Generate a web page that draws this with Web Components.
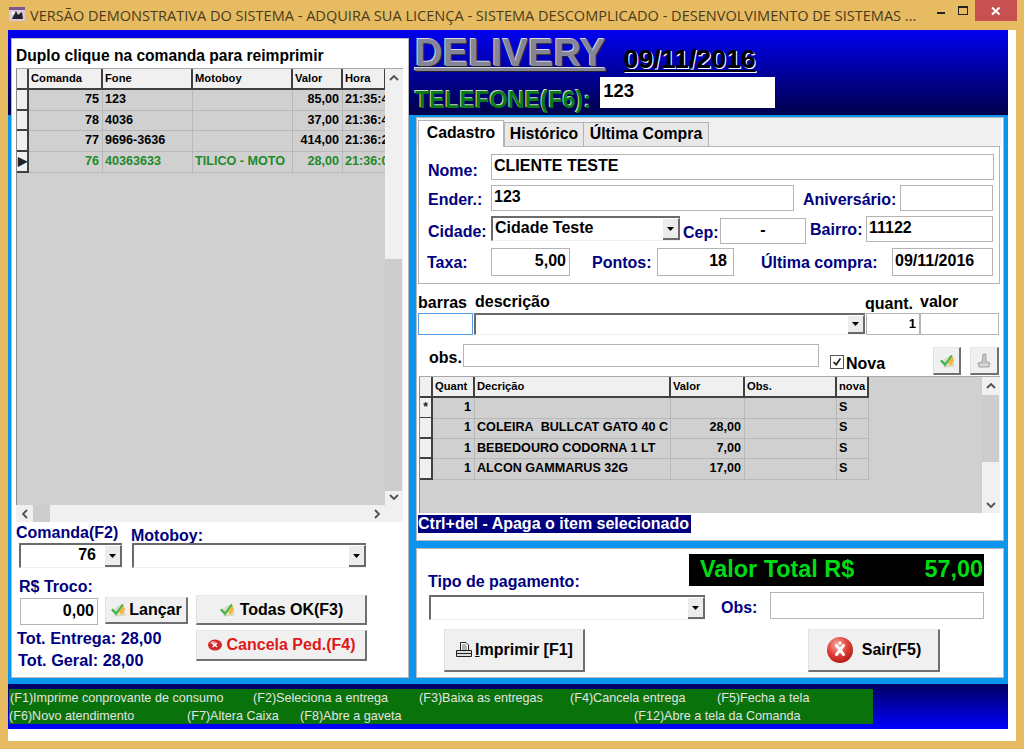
<!DOCTYPE html>
<html lang="pt">
<head>
<meta charset="utf-8">
<title>Delivery</title>
<style>
  html, body { margin: 0; padding: 0; background: #e6bb62; }
</style>
</head>
<body>
<delivery-app></delivery-app>
<script>
const CHECK_ICON = `<svg width="16" height="16" viewBox="0 0 16 16"><path d="M6 6 L13 2 L15 13 L5 14 Z" fill="#e9e2c8" stroke="#c8c0a8" stroke-width=".6"/><path d="M9 10 L13 3 L15 7 L12 13 Z" fill="#f2b63c"/><path d="M1 8 L3 6.5 L6 10 L12 2 L13.5 3 L6.2 13.5 Z" fill="#3fb54a"/></svg>`;
const STOP_SMALL = `<svg width="16" height="14" viewBox="0 0 16 14"><ellipse cx="8" cy="7" rx="7" ry="5.5" fill="#cf2a2a"/><ellipse cx="6" cy="4.6" rx="3" ry="1.6" fill="#ef8d8d"/><path d="M5.5 5 L10 9 M10 5 L5.5 9" stroke="#fff" stroke-width="1.6"/></svg>`;
const STOP_BIG = `<svg width="28" height="28" viewBox="0 0 28 28"><defs><radialGradient id="g" cx=".4" cy=".3" r=".8"><stop offset="0" stop-color="#f7b0a8"/><stop offset=".5" stop-color="#e04038"/><stop offset="1" stop-color="#a81410"/></radialGradient></defs><circle cx="14" cy="14" r="13" fill="url(#g)"/><path d="M10.5 9.5 L17.5 18.5 M17.5 9.5 L10.5 18.5" stroke="#fff" stroke-width="3" stroke-linecap="round"/><circle cx="14" cy="7" r="1.6" fill="#fff"/></svg>`;
const PRINT_ICON = `<svg width="18" height="18" viewBox="0 0 18 18" fill="#fff" stroke="#222" stroke-width="1"><path d="M5.5 1.5 H11 L13.5 4 V9.5 H5.5 Z"/><path d="M7 4 H11 M7 6 H12 M7 8 H12" stroke-width=".7"/><path d="M1.5 9.5 H16.5 V15.5 H1.5 Z" fill="#ddd"/><path d="M1.5 12.5 H16.5"/></svg>`;
const GHOST_ICON = `<svg width="16" height="18" viewBox="0 0 16 18"><path d="M7 2 L10 2 L10 9 L14 11 L13 15 L3 15 L2 11 L6 10 Z" fill="#c4c4c4" stroke="#a8a8a8"/><path d="M4 13 H12" stroke="#eee"/></svg>`;

class TitleBar extends HTMLElement {
  constructor() {
    super();
    this.attachShadow({ mode: "open" }).innerHTML = `
      <style>
        :host { display: flex; height: 30px; box-sizing: border-box; padding-left: 9px; align-items: flex-start; color: #4a3b1c; font: 14.55px "Open Sans", sans-serif; }
        #icon { margin: 7px 5px 0 0; flex: none; }
        #text { flex: 1; line-height: 31px; white-space: nowrap; overflow: hidden; }
        #btns { display: flex; flex: none; width: 93px; }
        .b { width: 24px; height: 21px; display: flex; align-items: center; justify-content: center; }
        #close { width: 45px; background: #c75050; margin-right: 7px; }
      </style>
      <svg id="icon" width="16" height="14" viewBox="0 0 16 14"><rect width="16" height="14" fill="#d8c8d8"/><path d="M0 0 H16 V3 H0 Z" fill="#7a5a8a"/><path d="M3 12 L7 4 L9 8 L13 5 L14 12 Z" fill="#222"/><circle cx="4" cy="6" r="1.5" fill="#fff"/></svg>
      <div id="text"><slot></slot></div>
      <div id="btns">
        <div class="b"><svg width="10" height="10"><rect x="0" y="6" width="8" height="2" fill="#222"/></svg></div>
        <div class="b"><svg width="12" height="10"><rect x=".5" y=".5" width="9" height="8" fill="none" stroke="#222"/><rect x="0" y="0" width="10" height="2" fill="#222"/></svg></div>
        <div class="b" id="close"><svg width="10" height="10"><path d="M1 1.5 L8.5 8.5 M8.5 1.5 L1 8.5" stroke="#fff" stroke-width="2"/></svg></div>
      </div>`;
  }
}

class FormLabel extends HTMLElement {
  constructor() {
    super();
    this.attachShadow({ mode: "open" }).innerHTML = `
      <style>:host { display: block; flex: none; box-sizing: border-box; color: #000080; font: bold 16px/18px "Liberation Sans", sans-serif; white-space: nowrap; }</style><slot></slot>`;
  }
}

class TextBox extends HTMLElement {
  constructor() {
    super();
    this.attachShadow({ mode: "open" }).innerHTML = `
      <style>:host { display: flex; flex: none; align-items: center; box-sizing: border-box; height: 26px; padding: 0 2px 2px 2px; background: #fff; border: 1px solid #b4b4b4; color: #000; font: bold 16px "Liberation Sans", sans-serif; white-space: nowrap; overflow: hidden; }
      :host([right]) { justify-content: flex-end; }
      :host([center]) { justify-content: center; }</style><slot></slot>`;
  }
}

class ComboBox extends HTMLElement {
  constructor() {
    super();
    this.attachShadow({ mode: "open" }).innerHTML = `
      <style>
        :host { display: flex; flex: none; box-sizing: border-box; height: 25px; background: #fff; border-top: 2px solid #6a6a6a; border-left: 2px solid #6a6a6a; border-bottom: 1px solid #f0f0f0; color: #000; font: bold 16px "Liberation Sans", sans-serif; white-space: nowrap; }
        #val { flex: 1; padding: 0 3px 2px 2px; display: flex; align-items: center; overflow: hidden; }
        :host([right]) #val { justify-content: flex-end; padding-right: 9px; }
        #arrow { flex: none; width: 17px; box-sizing: border-box; background: #ececec; border-right: 2px solid #6a6a6a; border-bottom: 2px solid #6a6a6a; border-top: 1px solid #fff; display: flex; align-items: center; justify-content: center; }
      </style>
      <div id="val"><slot></slot></div>
      <div id="arrow"><svg width="7" height="4"><path d="M0 0 H7 L3.5 4 Z" fill="#000"/></svg></div>`;
  }
}

class PushButton extends HTMLElement {
  constructor() {
    super();
    this.attachShadow({ mode: "open" }).innerHTML = `
      <style>:host { display: flex; flex: none; align-items: center; justify-content: center; box-sizing: border-box; background: #f0f0f0; border-right: 2px solid #707070; border-bottom: 2px solid #707070; border-left: 1px solid #e0e0e0; border-top: 1px solid #e8e8e8; color: #000; font: bold 16px "Liberation Sans", sans-serif; white-space: nowrap; gap: 3px; }</style><slot></slot>`;
  }
}

class ScrollBar extends HTMLElement {
  constructor() {
    super();
    this.attachShadow({ mode: "open" });
  }
  connectedCallback() {
    const h = this.hasAttribute("horizontal");
    const start = this.getAttribute("start");
    const size = this.getAttribute("size");
    const chev = h ? ["M5 1 L1 5 L5 9", "M1 1 L5 5 L1 9"] : ["M1 5 L5 1 L9 5", "M1 1 L5 5 L9 1"];
    const svg = (d) => `<div class="e"><svg width="${h ? 6 : 10}" height="${h ? 10 : 6}"><path d="${d}" fill="none" stroke="#505050" stroke-width="1.8"/></svg></div>`;
    this.shadowRoot.innerHTML = `
      <style>
        :host { display: flex; flex: none; background: #f0f0f0; flex-direction: ${h ? "row" : "column"}; ${h ? "height:17px" : "width:17px"}; }
        .e { flex: none; ${h ? "width:17px" : "height:17px"}; display: flex; align-items: center; justify-content: center; }
        #track { flex: 1; position: relative; }
        #thumb { position: absolute; background: #cdcdcd; ${h ? `left:${start}px;width:${size}px;top:0;bottom:0` : `top:${start}px;height:${size}px;left:0;right:0`}; }
      </style>
      ${svg(chev[0])}<div id="track"><div id="thumb"></div></div>${svg(chev[1])}`;
  }
}

class DataGrid extends HTMLElement {
  constructor() {
    super();
    this.attachShadow({ mode: "open" });
  }
  connectedCallback() {
    const cols = this.getAttribute("cols").split(" ").map(Number);
    const head = this.getAttribute("head").split("|");
    const align = this.getAttribute("align").split(" ");
    const rows = this.getAttribute("rows").split(";").map((r) => r.split("|"));
    const marks = (this.getAttribute("marks") || "").split("|");
    const active = Number(this.getAttribute("active") ?? -1);
    const template = cols.map((c) => c + "px").join(" ");
    let html = `<div class="r h" style="grid-template-columns:${template}"><div class="m"></div>` +
      head.map((t) => `<div class="c">${t}</div>`).join("") + `</div>`;
    rows.forEach((row, i) => {
      html += `<div class="r ${i === active ? "on" : ""}" style="grid-template-columns:${template}"><div class="m">${marks[i] || ""}</div>` +
        row.map((t, j) => `<div class="c ${align[j]}">${t}</div>`).join("") + `</div>`;
    });
    this.shadowRoot.innerHTML = `
      <style>
        :host { display: flex; flex: none; flex-direction: column; box-sizing: border-box; background: #f0f0f0; border-top: 1px solid #a8a8a8; color: #000; font: bold 12.6px "Liberation Sans", sans-serif; }
        #top { flex: 1; display: flex; min-height: 0; }
        #body { flex: 1; background: #d0d0d0; border-left: 1px solid #8a8a8a; overflow: hidden; }
        .r { display: grid; height: var(--row, 20.5px); white-space: nowrap; }
        .c { box-sizing: border-box; padding: 0 3px 0 2px; overflow: hidden; border-right: 1px solid #b8b8b8; border-bottom: 1px solid #b8b8b8; line-height: 19px; }
        .c.r2 { text-align: right; }
        .m { box-sizing: border-box; background: #f0f0f0; border-right: 2px solid #404040; border-bottom: 2px solid #404040; text-align: center; font: bold 12px/19px "Liberation Sans", sans-serif; color: #222; }
        .h { height: 21px; font-size: 11.2px; }
        .h .c { background: #f0f0f0; border-right: 2px solid #404040; border-bottom: 2px solid #404040; line-height: 18px; }
        .on .c { color: #1e8a2a; }
        #bottom { display: flex; flex: none; }
        #corner { width: 18px; flex: none; }
        scroll-bar { margin-right: 1px; }
        #hs { flex: 1; margin: 0; }
      </style>
      <div id="top"><div id="body">${html}</div><scroll-bar start="${this.getAttribute("vstart")}" size="${this.getAttribute("vsize")}"></scroll-bar></div>
      ${this.hasAttribute("hsize") ? `<div id="bottom"><scroll-bar id="hs" horizontal start="${this.getAttribute("hstart")}" size="${this.getAttribute("hsize")}"></scroll-bar><div id="corner"></div></div>` : ""}`;
  }
}

class ComandaPanel extends HTMLElement {
  constructor() {
    super();
    this.attachShadow({ mode: "open" }).innerHTML = `
      <style>
        :host { display: block; flex: none; box-sizing: border-box; width: 398px; height: 640px; margin: 8px 0 0 3px; padding: 8px 0 0 4px; background: #fff; border: 1px solid #b8b8b8; }
        #title { font: bold 15.6px/18px "Liberation Sans", sans-serif; color: #000; white-space: nowrap; }
        data-grid { width: 387px; height: 454px; margin-top: 3px; }
        .row { display: flex; }
        #low { display: flex; margin-top: 7px; }
        #lowl { width: 180px; flex: none; }
        #lowr { display: flex; flex-direction: column; gap: 5px; margin-top: 20px; }
      </style>
      <div id="title">Duplo clique na comanda para reimprimir</div>
      <data-grid cols="12 74 90 100 50 43" head="Comanda|Fone|Motoboy|Valor|Hora" align="r2 l l r2 l"
        rows="75|123||85,00|21:35:4;78|4036||37,00|21:36:4;77|9696-3636||414,00|21:36:2;76|40363633|TILICO - MOTO|28,00|21:36:0"
        marks="|||&#9654;" active="3" vstart="173" vsize="232" hstart="0" hsize="17"></data-grid>
      <div class="row" style="height:21px">
        <form-label style="width:115px;padding-top:2px">Comanda(F2)</form-label>
        <form-label style="padding-top:5px">Motoboy:</form-label>
      </div>
      <div class="row" style="padding-left:3px;gap:10px">
        <combo-box right style="width:103px">76</combo-box>
        <combo-box style="width:234px"></combo-box>
      </div>
      <div id="low">
        <div id="lowl">
          <form-label style="margin-left:3px;padding-top:3px">R$ Troco:</form-label>
          <div class="row" style="gap:7px;margin:1px 0 0 4px;align-items:flex-start">
            <text-box right style="width:78px;height:27px;margin-top:1px;padding-right:3px">0,00</text-box>
            <push-button style="width:83px;height:27px">${CHECK_ICON}Lançar</push-button>
          </div>
          <form-label style="margin:4px 0 0 1px;font-size:16.3px">Tot. Entrega: 28,00</form-label>
          <form-label style="margin:4px 0 0 2px;font-size:16.3px">Tot. Geral: 28,00</form-label>
        </div>
        <div id="lowr">
          <push-button style="width:171px;height:30px;gap:5px">${CHECK_ICON}Todas OK(F3)</push-button>
          <push-button style="width:171px;height:31px;color:#e01818;gap:4px">${STOP_SMALL}Cancela Ped.(F4)</push-button>
        </div>
      </div>`;
  }
}

class PhoneHeader extends HTMLElement {
  constructor() {
    super();
    this.attachShadow({ mode: "open" }).innerHTML = `
      <style>
        :host { display: flex; flex-direction: column; flex: none; height: 87px; box-sizing: border-box; font-family: "Liberation Sans", sans-serif; font-weight: bold; white-space: nowrap; }
        #line1 { display: flex; height: 47px; }
        #delivery { font-size: 38.4px; line-height: 46px; color: #85859a; text-decoration: underline; text-shadow: -1px -1px 0 #d8d8e0, 1px 1px 0 #222; margin-left: 1px; }
        #date { font-size: 26.7px; line-height: 30px; margin: 14px 0 0 18px; color: #000; text-decoration: underline; text-shadow: 1px 1px 0 #fff; }
        #line2 { display: flex; }
        #phone { font-size: 23.5px; line-height: 30px; color: #0a7a14; text-shadow: -1px -1px 0 #c8d8c8; margin: 8px 0 0 1px; }
        text-box { width: 175px; height: 31px; margin-left: 9px; border: 0; align-items: flex-start; font-size: 18.5px; padding: 3px 3px 0; }
      </style>
      <div id="line1"><div id="delivery">DELIVERY</div><div id="date">09/11/2016</div></div>
      <div id="line2"><div id="phone">TELEFONE(F6):</div><text-box>123</text-box></div>`;
  }
}

class ClientTabs extends HTMLElement {
  constructor() {
    super();
    this.attachShadow({ mode: "open" }).innerHTML = `
      <style>
        :host { display: block; flex: none; box-sizing: border-box; width: 588px; height: 424px; margin-left: 2px; background: #fff; border: 1px solid #b8b8b8; font-family: "Liberation Sans", sans-serif; }
        #strip { display: flex; align-items: flex-end; height: 28px; padding-left: 1px; margin-right: 2px; background: #f0f0f0; border-bottom: 0; }
        .tab { box-sizing: border-box; height: 24px; padding: 0; text-align: center; font: bold 15.8px/22px "Liberation Sans", sans-serif; background: #e8e8e8; border: 1px solid #b4b4b4; border-bottom: 0; margin-left: -1px; }
        .tab.on { height: 27px; background: #fff; line-height: 23px; margin: 0 1px 0 0; margin-bottom: -1px; position: relative; }
        #fields { box-sizing: border-box; width: 582px; height: 138px; margin-left: 1px; border: 1px solid #b4b4b4; background: #fff; padding: 7px 0 0 9px; }
        .row { display: flex; align-items: flex-start; }
        .below { display: flex; align-items: flex-start; margin-left: 1px; }
        #ctrl { display: block; width: 273px; height: 18px; margin: 2px 0 0 1px; background: #000080; color: #fff; font: bold 16px/18px "Liberation Sans", sans-serif; white-space: nowrap; overflow: hidden; }
        #check { width: 14px; height: 14px; flex: none; box-sizing: border-box; border: 1px solid #555; background: #fff; margin: 11px 2px 0 11px; }
        push-button.mini { width: 28px; height: 28px; margin-top: 3px; }
      </style>
      <div id="strip">
        <div class="tab on" style="width:86px">Cadastro</div>
        <div class="tab" style="width:80px">Histórico</div>
        <div class="tab" style="width:126px">Última Compra</div>
      </div>
      <div id="fields">
        <div class="row">
          <form-label style="width:63px;padding-top:8px">Nome:</form-label>
          <text-box style="width:503px">CLIENTE TESTE</text-box>
        </div>
        <div class="row" style="margin-top:5px">
          <form-label style="width:63px;padding-top:6px">Ender.:</form-label>
          <text-box style="width:303px">123</text-box>
          <form-label style="margin-left:9px;width:97px;padding-top:6px">Aniversário:</form-label>
          <text-box style="width:93px"></text-box>
        </div>
        <div class="row" style="margin-top:5px">
          <form-label style="width:63px;padding-top:7px">Cidade:</form-label>
          <combo-box style="width:189px">Cidade Teste</combo-box>
          <form-label style="margin-left:3px;width:37px;padding-top:8px">Cep:</form-label>
          <text-box center style="width:86px;margin-top:2px">-</text-box>
          <form-label style="margin-left:4px;width:56px;padding-top:5px">Bairro:</form-label>
          <text-box style="width:127px">11122</text-box>
        </div>
        <div class="row" style="margin-top:4px">
          <form-label style="width:63px;padding-top:6px;margin-left:-1px;margin-right:1px">Taxa:</form-label>
          <text-box right style="width:79px;height:28px;padding-right:3px">5,00</text-box>
          <form-label style="margin-left:22px;width:65px;padding-top:6px">Pontos:</form-label>
          <text-box right style="width:77px;height:28px;padding-right:6px">18</text-box>
          <form-label style="margin-left:27px;width:131px;padding-top:6px">Última compra:</form-label>
          <text-box style="width:101px;height:28px">09/11/2016</text-box>
        </div>
      </div>
      <div class="below" style="height:29px">
        <form-label style="color:#000;width:57px;padding-top:10px">barras</form-label>
        <form-label style="color:#000;width:390px;padding-top:9px">descrição</form-label>
        <form-label style="color:#000;width:55px;padding-top:11px">quant.</form-label>
        <form-label style="color:#000;padding-top:9px">valor</form-label>
      </div>
      <div class="below" style="height:22px">
        <text-box style="width:55px;height:22px;border-color:#569de5"></text-box>
        <combo-box style="width:391px;height:22px;margin-left:1px"></combo-box>
        <text-box right style="width:54px;height:22px;margin-left:1px;padding-right:3px;font-size:13px">1</text-box>
        <text-box style="width:79px;height:22px"></text-box>
      </div>
      <div class="below" style="height:32px;margin-top:9px">
        <form-label style="color:#000;margin-left:11px;width:34px;padding-top:5px">obs.</form-label>
        <text-box style="width:356px;height:23px"></text-box>
        <svg id="check" viewBox="0 0 14 14"><path d="M3 7 L6 10 L11 3" fill="none" stroke="#222" stroke-width="2"/></svg>
        <form-label style="color:#000;width:87px;padding-top:11px">Nova</form-label>
        <push-button class="mini">${CHECK_ICON}</push-button>
        <push-button class="mini" style="width:29px;margin-left:9px">${GHOST_ICON}</push-button>
      </div>
      <data-grid style="width:581px;height:137px;margin-left:2px;--row:20.4px" cols="13 42 196 74 92 32" head="Quant|Decrição|Valor|Obs.|nova" align="r2 l r2 l l"
        rows="1||||S;1|COLEIRA&nbsp; BULLCAT GATO 40 C|28,00||S;1|BEBEDOURO CODORNA 1 LT|7,00||S;1|ALCON GAMMARUS 32G|17,00||S"
        marks="*" vstart="1" vsize="67"></data-grid>
      <div id="ctrl">Ctrl+del - Apaga o item selecionado</div>`;
  }
}

class PaymentPanel extends HTMLElement {
  constructor() {
    super();
    this.attachShadow({ mode: "open" }).innerHTML = `
      <style>
        :host { display: block; flex: none; box-sizing: border-box; width: 588px; height: 130px; margin: 7px 0 0 2px; background: #fff; border: 1px solid #b8b8b8; padding-top: 5px; }
        .row { display: flex; align-items: flex-start; }
        #total { display: flex; justify-content: space-between; box-sizing: border-box; width: 295px; height: 32px; margin-left: auto; margin-right: 19px; padding: 0 1px 0 11px; background: #000; color: #00dc14; font: bold 23.4px/31px "Liberation Sans", sans-serif; white-space: nowrap; }
      </style>
      <div class="row" style="height:38px">
        <form-label style="padding:19px 0 0 11px">Tipo de pagamento:</form-label>
        <div id="total"><span>Valor Total R$</span><span>57,00</span></div>
      </div>
      <div class="row" style="height:37px;padding-left:12px">
        <combo-box style="width:276px;margin-top:3px"></combo-box>
        <form-label style="margin-left:16px;width:49px;padding-top:7px">Obs:</form-label>
        <text-box style="width:214px;height:27px"></text-box>
      </div>
      <div class="row" style="padding-left:27px">
        <push-button style="width:141px;height:43px;gap:2px">${PRINT_ICON}<span><u>I</u>mprimir [F1]</span></push-button>
        <push-button style="width:132px;height:43px;margin-left:223px;gap:8px">${STOP_BIG}Sair(F5)</push-button>
      </div>`;
  }
}

class HelpBar extends HTMLElement {
  constructor() {
    super();
    this.attachShadow({ mode: "open" }).innerHTML = `
      <style>
        :host { display: block; box-sizing: border-box; width: 864px; height: 35px; margin: 5px 0 0 1px; background: #0a720a; color: #e4e4e4; font: 12.6px/18px "Liberation Sans", sans-serif; white-space: nowrap; }
        .l { display: flex; }
        .l span { flex: none; }
      </style>
      <div class="l" style="padding-left:1px"><span style="width:243px">(F1)Imprime conprovante de consumo</span><span style="width:166px">(F2)Seleciona a entrega</span><span style="width:151px">(F3)Baixa as entregas</span><span style="width:147px">(F4)Cancela entrega</span><span>(F5)Fecha a tela</span></div>
      <div class="l"><span style="width:178px">(F6)Novo atendimento</span><span style="width:113px">(F7)Altera Caixa</span><span style="width:334px">(F8)Abre a gaveta</span><span>(F12)Abre a tela da Comanda</span></div>`;
  }
}

class DeliveryApp extends HTMLElement {
  constructor() {
    super();
    this.attachShadow({ mode: "open" }).innerHTML = `
      <style>
        :host { display: flex; flex-direction: column; box-sizing: border-box; width: 1024px; height: 749px; background: #e6bb62; overflow: hidden; }
        #client { width: 1008px; height: 711px; margin-left: 8px; background: #fff; }
        #form { width: 1000px; height: 699px; background: linear-gradient(#0000f0 0, #00004a 85px, #0a96ee 85px, #0a96ee 654px, #000060 654px, #0000ff 699px); }
        #main { display: flex; height: 654px; }
        #right { margin-left: 5px; flex: 1; display: flex; flex-direction: column; }
      </style>
      <title-bar>VERSÃO DEMONSTRATIVA DO SISTEMA - ADQUIRA SUA LICENÇA - SISTEMA DESCOMPLICADO - DESENVOLVIMENTO DE SISTEMAS ...</title-bar>
      <div id="client">
        <div id="form">
          <div id="main">
            <comanda-panel></comanda-panel>
            <div id="right">
              <phone-header></phone-header>
              <client-tabs></client-tabs>
              <payment-panel></payment-panel>
            </div>
          </div>
          <help-bar></help-bar>
        </div>
      </div>`;
  }
}

customElements.define("title-bar", TitleBar);
customElements.define("form-label", FormLabel);
customElements.define("text-box", TextBox);
customElements.define("combo-box", ComboBox);
customElements.define("push-button", PushButton);
customElements.define("scroll-bar", ScrollBar);
customElements.define("data-grid", DataGrid);
customElements.define("comanda-panel", ComandaPanel);
customElements.define("phone-header", PhoneHeader);
customElements.define("client-tabs", ClientTabs);
customElements.define("payment-panel", PaymentPanel);
customElements.define("help-bar", HelpBar);
customElements.define("delivery-app", DeliveryApp);
</script>
</body>
</html>
